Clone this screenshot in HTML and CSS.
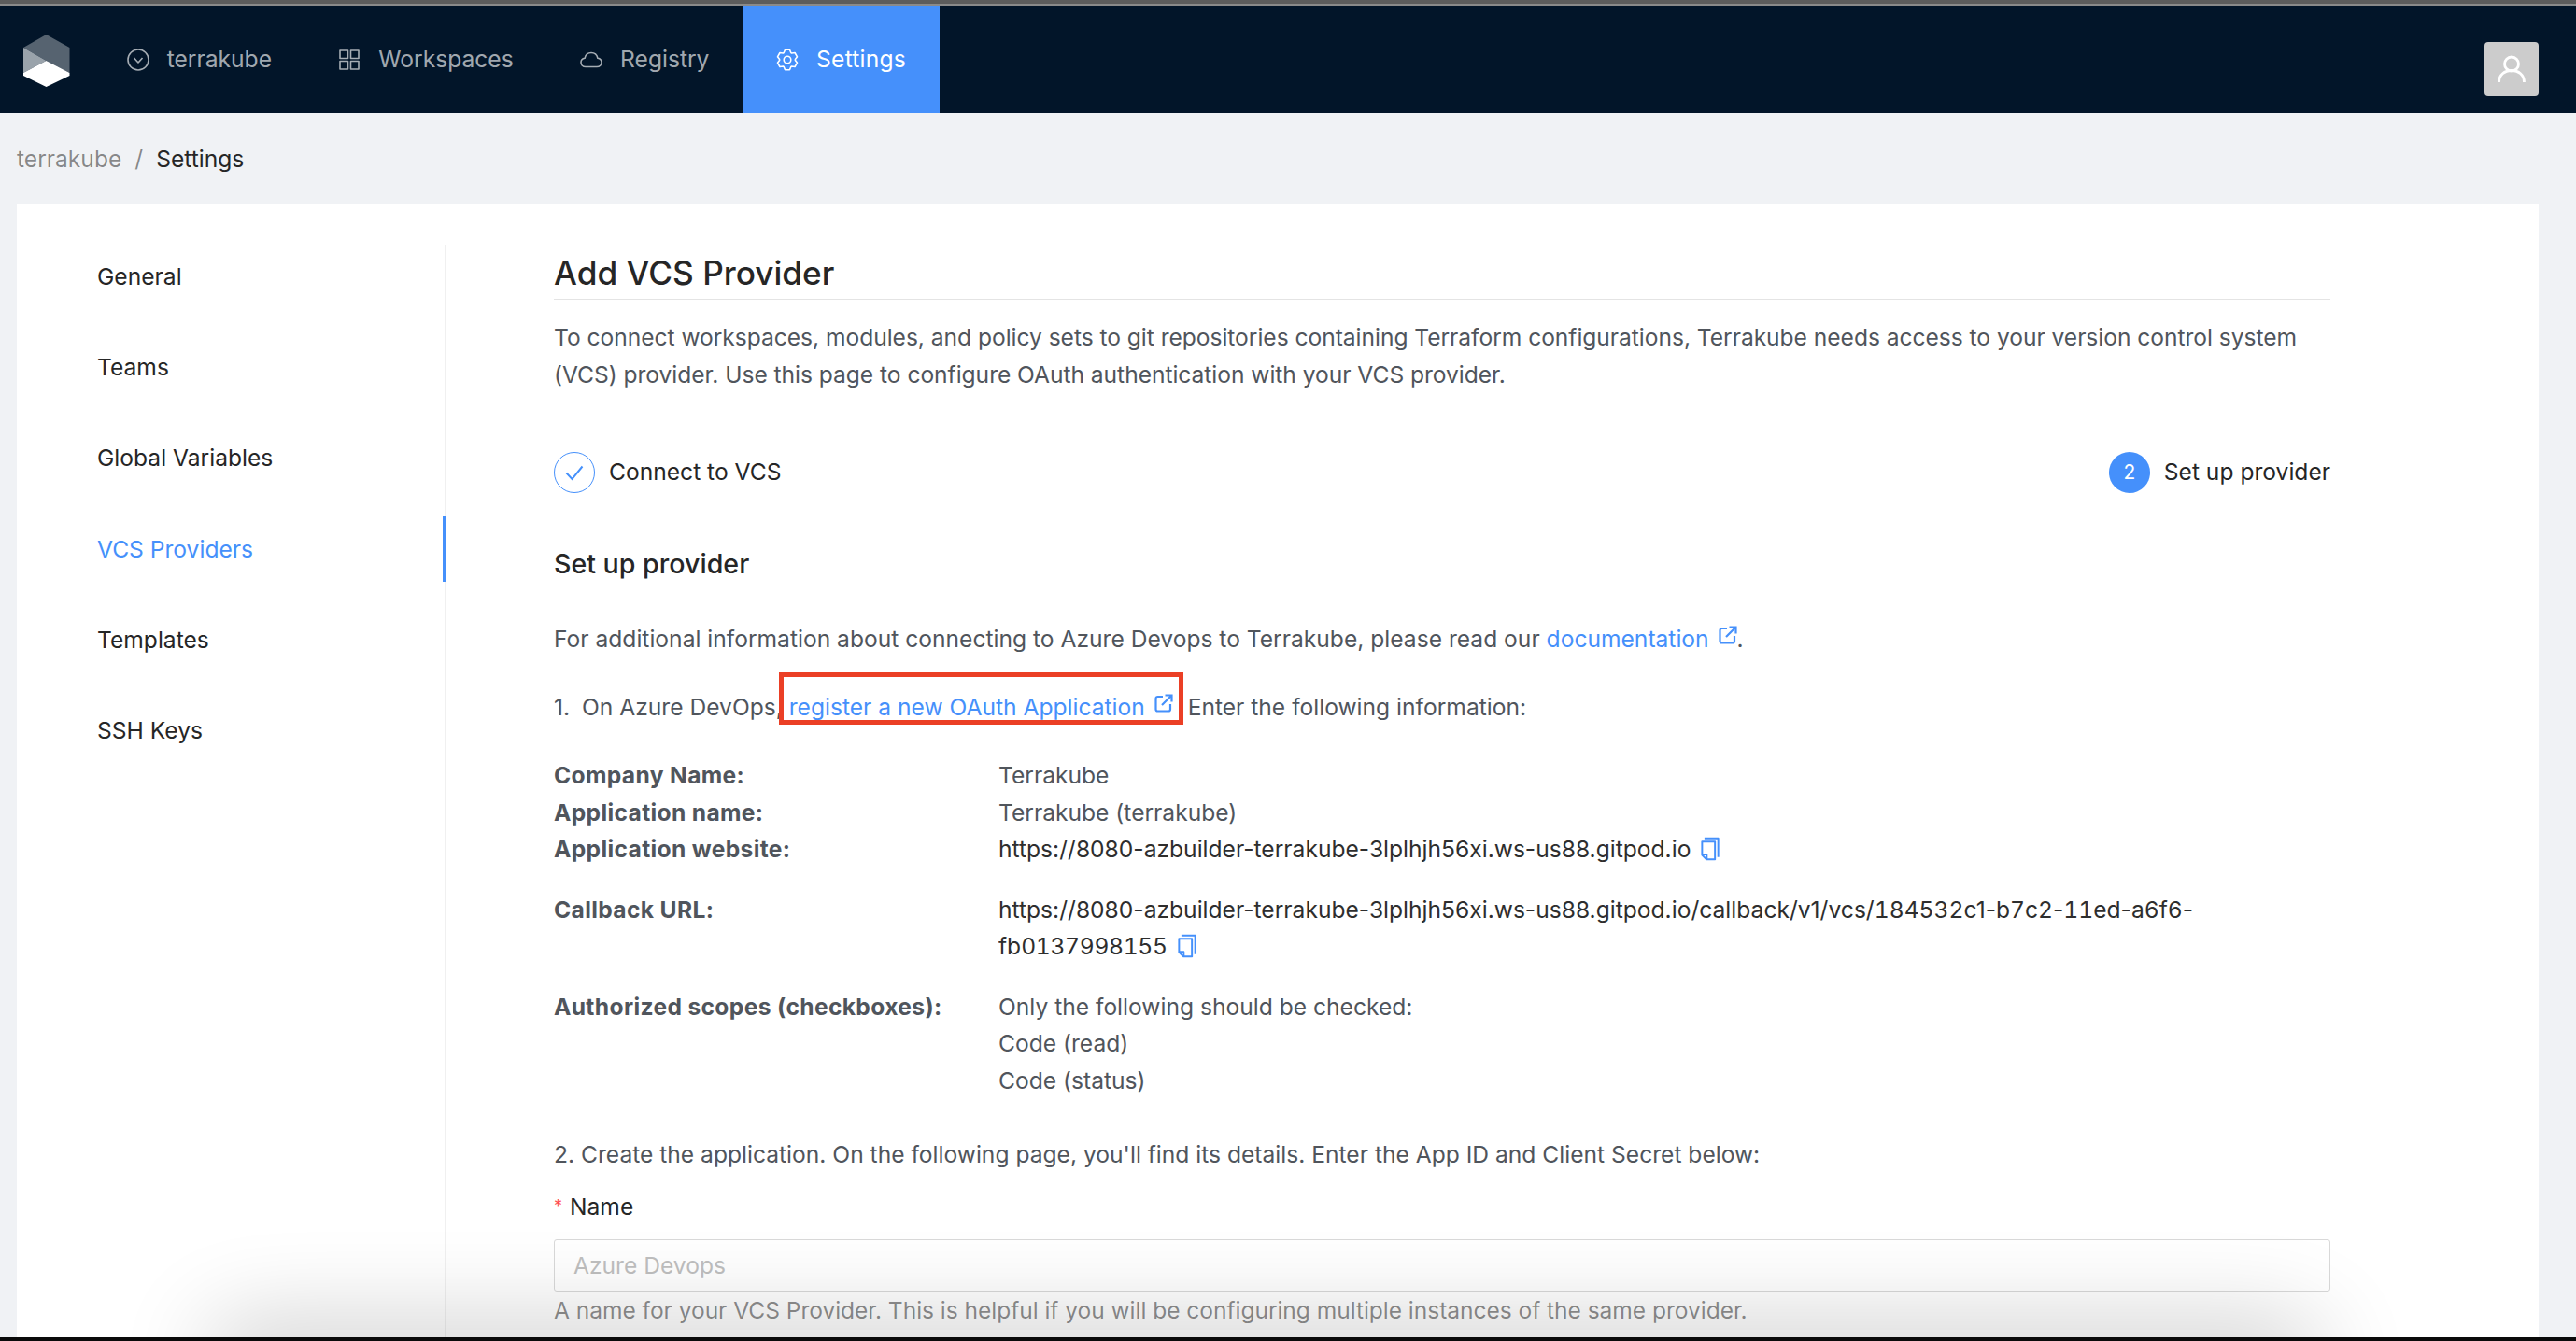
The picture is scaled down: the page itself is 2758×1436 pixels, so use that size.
FILE: index.html
```html
<!DOCTYPE html>
<html lang="en">
<head>
<meta charset="utf-8">
<title>Terrakube - Settings</title>
<link rel="stylesheet" href="styles.css">
</head>
<body>
<div class="chrome"></div>
<header class="nav">
  <svg class="logo" viewBox="0 0 50 56" width="50" height="56">
    <polygon points="24.5,0 49.5,14 49.5,41 24.5,28 0,14" fill="#566370"/>
    <polygon points="0,14 24.5,28 0,41" fill="#9aa3ab"/>
    <polygon points="24.5,28 49.5,41 49.5,44 24.5,56 0,44 0,41" fill="#fff"/>
  </svg>
  <a class="nav-item">
    <svg class="nav-icon" viewBox="0 0 24 24"><circle cx="12" cy="12" r="11"/><path d="M7.5 10l4.5 5 4.5-5"/></svg>terrakube</a>
  <a class="nav-item">
    <svg class="nav-icon" viewBox="0 0 24 24"><rect x="2" y="2" width="8.5" height="8.5"/><rect x="13.5" y="2" width="8.5" height="8.5"/><rect x="2" y="13.5" width="8.5" height="8.5"/><rect x="13.5" y="13.5" width="8.5" height="8.5"/></svg>Workspaces</a>
  <a class="nav-item">
    <svg class="nav-icon" viewBox="0 0 24 24"><path d="M6 19.5h12c3 0 5-2.100 5-4.700 0-2.400-1.800-4.300-4.100-4.600C18 6.500 15.300 4.500 12 4.500S6 6.500 5.100 10.200C2.800 10.500 1 12.400 1 14.800c0 2.600 2 4.700 5 4.700z"/></svg>Registry</a>
  <a class="nav-item nav-active">
    <svg class="nav-icon" viewBox="0 0 24 24"><path d="M9.530 1.280L14.470 1.280L15.810 4.520L16.580 4.950L20.040 4.500L22.520 8.790L20.390 11.560L20.390 12.440L22.520 15.210L20.040 19.500L16.580 19.050L15.810 19.480L14.470 22.720L9.530 22.720L8.190 19.480L7.420 19.050L3.960 19.500L1.480 15.210L3.610 12.440L3.610 11.560L1.480 8.790L3.960 4.500L7.420 4.950L8.190 4.520Z"/><circle cx="12" cy="12" r="3.800"/></svg>Settings</a>
  <div class="avatar">
    <svg viewBox="0 0 30 30" width="30" height="30"><circle cx="15" cy="9.500" r="7.500"/><path d="M1.500 29c0-8 6-12.500 13.500-12.500S28.500 21 28.500 29"/></svg>
  </div>
</header>
<nav class="crumbs"><span class="crumb-link">terrakube</span><span class="crumb-sep">/</span><span class="crumb-current">Settings</span></nav>
<div class="card">
  <aside class="side">
    <a class="side-item">General</a>
    <a class="side-item">Teams</a>
    <a class="side-item">Global Variables</a>
    <a class="side-item side-active">VCS Providers</a>
    <a class="side-item">Templates</a>
    <a class="side-item">SSH Keys</a>
  </aside>
  <main class="main">
    <h1 class="title">Add VCS Provider</h1>
    <p class="intro">To connect workspaces, modules, and policy sets to git repositories containing Terraform configurations, Terrakube needs access to your version control system (VCS) provider. Use this page to configure OAuth authentication with your VCS provider.</p>
    <div class="steps">
      <span class="step-done"><svg viewBox="0 0 24 24" width="24" height="24"><path d="M3.500 12.500l6 6.500L20.500 5.500"/></svg></span>
      <span class="step-label">Connect to VCS</span>
      <span class="step-line"></span>
      <span class="step-num">2</span>
      <span class="step-label">Set up provider</span>
    </div>
    <h2 class="subtitle">Set up provider</h2>
    <p class="line info">For additional information about connecting to Azure Devops to Terrakube, please read our <a class="link">documentation <svg class="ext" viewBox="0 0 20 20"><path d="M9 3H3.500A2 2 0 0 0 1.500 5v11.500a2 2 0 0 0 2 2H15a2 2 0 0 0 2-2V11"/><path d="M8 12L18.500 1.500M11.500 1.500h7v7"/></svg></a>.</p>
    <p class="line register"><span class="num">1.</span>On Azure DevOps, <a class="link link-gap">register a new OAuth Application <svg class="ext" viewBox="0 0 20 20"><path d="M9 3H3.500A2 2 0 0 0 1.500 5v11.500a2 2 0 0 0 2 2H15a2 2 0 0 0 2-2V11"/><path d="M8 12L18.500 1.500M11.500 1.500h7v7"/></svg></a> Enter the following information:</p>
    <dl class="details">
      <dt>Company Name:</dt><dd>Terrakube</dd>
      <dt>Application name:</dt><dd>Terrakube (terrakube)</dd>
      <dt>Application website:</dt><dd class="url">https://8080-azbuilder-terrakube-3lplhjh56xi.ws-us88.gitpod.io <svg class="copy" viewBox="0 0 1024 1024"><path d="M832 64H296c-4.400 0-8 3.600-8 8v56c0 4.400 3.600 8 8 8h496v688c0 4.400 3.600 8 8 8h56c4.400 0 8-3.600 8-8V96c0-17.700-14.300-32-32-32zM704 192H192c-17.700 0-32 14.300-32 32v530.700c0 8.500 3.400 16.600 9.400 22.600l173.300 173.300c2.200 2.200 4.700 4 7.400 5.500v1.900h4.200c3.500 1.300 7.200 2 11 2H704c17.700 0 32-14.300 32-32V224c0-17.700-14.300-32-32-32zM350 856.200L263.900 770H350v86.200zM664 888H414V746c0-22.100-17.900-40-40-40H232V264h432v624z"/></svg></dd>
    </dl>
    <dl class="details details-gap">
      <dt>Callback URL:</dt><dd class="url">https://8080-azbuilder-terrakube-3lplhjh56xi.ws-us88.gitpod.io/callback/v1/vcs/<span class="tnum">184532</span>c1-b<span class="tnum">7</span>c<span class="tnum">2</span>-<span class="tnum">11</span>ed-a<span class="tnum">6</span>f<span class="tnum">6</span>-<span class="nowrap">fb<span class="tnum tnum-tight">0137998155</span> <svg class="copy" viewBox="0 0 1024 1024"><path d="M832 64H296c-4.400 0-8 3.600-8 8v56c0 4.400 3.600 8 8 8h496v688c0 4.400 3.600 8 8 8h56c4.400 0 8-3.600 8-8V96c0-17.700-14.300-32-32-32zM704 192H192c-17.700 0-32 14.300-32 32v530.700c0 8.500 3.400 16.600 9.400 22.600l173.300 173.300c2.200 2.200 4.700 4 7.400 5.500v1.900h4.200c3.500 1.300 7.200 2 11 2H704c17.700 0 32-14.300 32-32V224c0-17.700-14.300-32-32-32zM350 856.200L263.900 770H350v86.200zM664 888H414V746c0-22.100-17.900-40-40-40H232V264h432v624z"/></svg></span></dd>
    </dl>
    <dl class="details details-gap">
      <dt>Authorized scopes (checkboxes):</dt><dd>Only the following should be checked:<br>Code (read)<br>Code (status)</dd>
    </dl>
    <p class="line create">2. Create the application. On the following page, you'll find its details. Enter the App ID and Client Secret below:</p>
    <label class="field-label"><span class="req">*</span>Name</label>
    <input class="field" type="text" placeholder="Azure Devops">
    <p class="help">A name for your VCS Provider. This is helpful if you will be configuring multiple instances of the same provider.</p>
  </main>
</div>
<div class="highlight"></div>
<div class="window-shadow"></div>
<div class="window-edge"></div>
</body>
</html>
```
FILE: styles.css
```css
* { box-sizing: border-box; }
html, body { margin: 0; height: 1436px; overflow: hidden; }
body {
  background: #f0f2f5;
  font-family: Inter, "Liberation Sans", sans-serif;
  font-size: 24.6px;
  line-height: 39.5px;
  color: #262626;
  position: relative;
}
.chrome { height: 6px; background: #5c5c5c; border-bottom: 2px solid #8a8a8a; }
.nav {
  height: 115px;
  background: #021529;
  display: flex;
  align-items: center;
  position: relative;
}
.logo { margin-left: 25px; margin-right: 25px; flex: none; margin-top: 3px; }
.nav-item {
  height: 115px;
  padding: 0 35.7px;
  display: flex;
  align-items: center;
  gap: 19px;
  color: rgba(255,255,255,.65);
}
.nav-active { background: #4590fb; color: #fff; padding: 0 36px; letter-spacing: .2px; }
.nav-icon { width: 24px; height: 24px; fill: none; stroke: currentColor; stroke-width: 1.6; stroke-linejoin: round; flex: none; }
.avatar {
  position: absolute;
  left: 2660px;
  top: 39px;
  width: 58px;
  height: 58px;
  background: #ccc;
  border-radius: 4px;
  display: flex;
  align-items: center;
  justify-content: center;
}
.avatar svg { fill: none; stroke: #fff; stroke-width: 2.8; }
.crumbs { height: 97px; padding: 30px 0 0 18px; }
.crumb-link { color: rgba(0,0,0,.45); }
.crumb-sep { color: rgba(0,0,0,.45); margin: 0 14px; }
.crumb-current { color: #262626; }
.card {
  margin: 0 40px 0 18px;
  height: 1300px;
  background: #fff;
  display: flex;
  align-items: flex-start;
}
.side {
  flex: none;
  width: 459px;
  height: 1300px;
  margin-top: 44px;
  border-right: 1px solid #f0f0f0;
  display: flex;
  flex-direction: column;
  gap: 27.1px;
}
.side-item {
  height: 70px;
  padding-left: 86px;
  display: flex;
  align-items: center;
  margin-right: -2px;
}
.side-active { color: #4590fb; border-right: 4px solid #4590fb; }
.main { width: 1902px; margin-left: 116px; padding-top: 49px; }
.title {
  margin: 0;
  font-size: 35.2px;
  font-weight: 500;
  line-height: 50px;
  height: 54px;
  border-bottom: 1px solid #e4e4e4;
}
.intro { margin: 21px 0 0; color: #50555c; letter-spacing: -.04px; }
.steps { display: flex; align-items: center; height: 44px; margin-top: 63px; }
.step-done {
  width: 44px; height: 44px; border-radius: 50%;
  border: 1.5px solid #4590fb;
  display: flex; align-items: center; justify-content: center;
  flex: none;
}
.step-done svg { fill: none; stroke: #4590fb; stroke-width: 2; }
.step-num {
  width: 44px; height: 44px; border-radius: 50%;
  background: #4590fb; color: #fff;
  display: flex; align-items: center; justify-content: center;
  font-size: 21px;
  flex: none;
}
.step-label { margin-left: 15px; flex: none; }
.step-line { flex: 1; height: 1px; background: #4d8ce8; margin: 0 22px; }
.subtitle { margin: 54px 0 0; font-size: 28.6px; font-weight: 500; line-height: 44px; }
.line { margin: 0; color: #50555c; }
.info { margin-top: 39px; }
.register { margin-top: 33px; }
.create { margin-top: 40px; }
.num { display: inline-block; width: 30px; }
.link { color: #4590fb; }
.link-gap { margin-right: 9px; }
.ext { width: 20px; height: 20px; fill: none; stroke: #4590fb; stroke-width: 2.2; vertical-align: 3px; margin-left: 3px; }
.details {
  margin: 34px 0 0;
  display: grid;
  grid-template-columns: 476px 1fr;
  color: #50555c;
}
.details-gap { margin-top: 25px; }
.details dt { font-weight: 700; letter-spacing: .35px; }
.details dd { margin: 0; }
.url { color: #2e2e2e; }
.tnum { font-variant-numeric: tabular-nums; }
.tnum-tight { letter-spacing: -.3px; }
.nowrap { white-space: nowrap; }
.copy { width: 28px; height: 28px; fill: #4590fb; vertical-align: -5px; }
.field-label { display: block; margin-top: 15px; color: #262626; }
.req { color: #ff4d4f; font-size: 18px; margin-right: 8px; vertical-align: 3px; }
.field {
  display: block;
  width: 100%;
  height: 56px;
  margin-top: 15px;
  padding: 0 20px;
  border: 1px solid #d9d9d9;
  border-radius: 3px;
  background: transparent;
  font: inherit;
  outline: none;
}
.field::placeholder { color: #bfbfbf; opacity: 1; }
.help { margin: 1px 0 0; color: rgba(0,0,0,.45); letter-spacing: -.06px; }
.highlight {
  position: absolute;
  left: 834px;
  top: 720px;
  width: 433px;
  height: 56px;
  border: 5px solid #eb3f25;
}
.window-shadow {
  position: absolute;
  left: 240px;
  right: 290px;
  top: 1436px;
  height: 40px;
  box-shadow: 0 0 100px 20px rgba(0,0,0,.2);
  border-radius: 30px;
}
.window-edge {
  position: absolute;
  left: 0;
  right: 0;
  top: 1432px;
  height: 4px;
  background: #0a0a0a;
}
```
